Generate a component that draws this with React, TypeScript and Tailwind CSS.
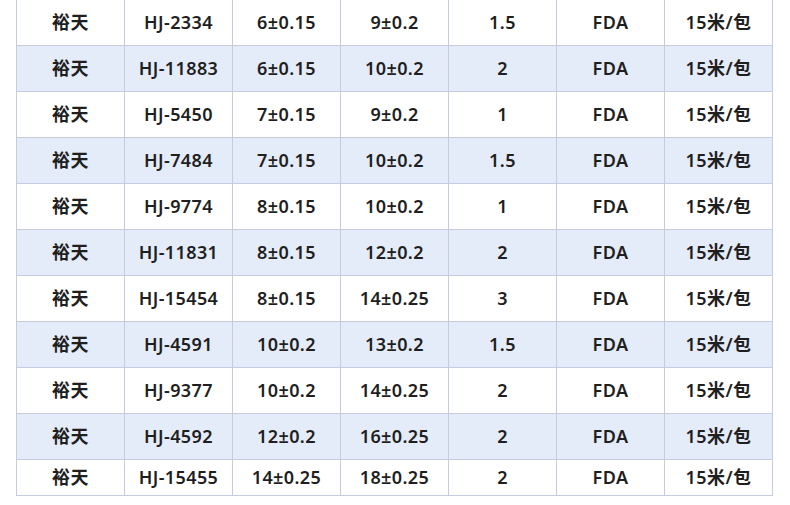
const rows: string[][] = [
  ["裕天", "HJ-2334", "6±0.15", "9±0.2", "1.5", "FDA", "15米/包"],
  ["裕天", "HJ-11883", "6±0.15", "10±0.2", "2", "FDA", "15米/包"],
  ["裕天", "HJ-5450", "7±0.15", "9±0.2", "1", "FDA", "15米/包"],
  ["裕天", "HJ-7484", "7±0.15", "10±0.2", "1.5", "FDA", "15米/包"],
  ["裕天", "HJ-9774", "8±0.15", "10±0.2", "1", "FDA", "15米/包"],
  ["裕天", "HJ-11831", "8±0.15", "12±0.2", "2", "FDA", "15米/包"],
  ["裕天", "HJ-15454", "8±0.15", "14±0.25", "3", "FDA", "15米/包"],
  ["裕天", "HJ-4591", "10±0.2", "13±0.2", "1.5", "FDA", "15米/包"],
  ["裕天", "HJ-9377", "10±0.2", "14±0.25", "2", "FDA", "15米/包"],
  ["裕天", "HJ-4592", "12±0.2", "16±0.25", "2", "FDA", "15米/包"],
  ["裕天", "HJ-15455", "14±0.25", "18±0.25", "2", "FDA", "15米/包"],
];

export default function App() {
  return (
    <div className="w-[790px] h-[505px] bg-white overflow-hidden">
      <div
        className="ml-[16px] w-[757px] border-l border-[#c6cce0] text-[18px] tracking-[0.4px] font-semibold text-[#1f1f1f]"
        style={{ fontFamily: '"Noto Sans", "Noto Sans CJK SC", sans-serif' }}
      >
        {rows.map((r, i) => (
          <div
            key={i}
            className={`grid grid-cols-[repeat(7,108px)] ${i % 2 === 1 ? "bg-[#e5ecf9]" : "bg-white"} ${i === rows.length - 1 ? "h-[36px]" : "h-[46px]"}`}
          >
            {r.map((c, j) => (
              <div
                key={j}
                className="flex items-center justify-center border-r border-b border-[#c6cce0]"
              >
                {c}
              </div>
            ))}
          </div>
        ))}
      </div>
    </div>
  );
}
